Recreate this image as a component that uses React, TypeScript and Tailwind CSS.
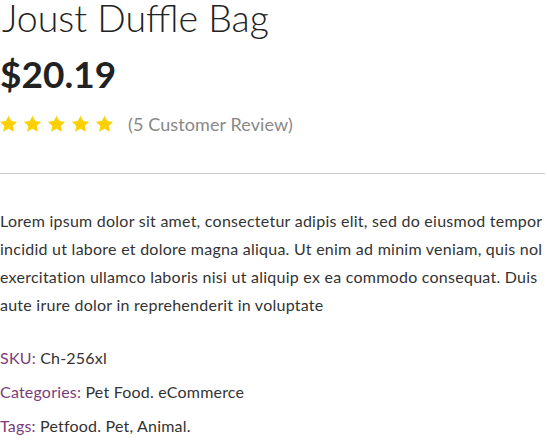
import React from "react";

function Star() {
  return (
    <svg width="19" height="18" viewBox="0 0 24 23" className="shrink-0">
      <path
        d="M12 0.8l3.3 7 7.6 0.9-5.6 5.2 1.5 7.6L12 17.7l-6.8 3.8 1.5-7.6L1.1 8.7l7.6-0.9z"
        fill="#fdd100"
      />
    </svg>
  );
}

export default function App() {
  return (
    <div
      className="w-[547px] h-[444px] bg-white overflow-hidden text-[#333]"
      style={{ fontFamily: "Lato, 'Noto Sans', sans-serif" }}
    >
      <h1 className="pl-[2px] text-[37.5px] leading-[36px] font-light text-[#222] whitespace-nowrap">
        Joust Duffle Bag
      </h1>
      <div className="text-[37px] leading-[40px] font-bold text-[#222] mt-[18px]">
        $20.19
      </div>
      <div className="flex items-center mt-[18px] h-[24px]">
        <div className="flex gap-[5px] ml-[-1px]">
          <Star />
          <Star />
          <Star />
          <Star />
          <Star />
        </div>
        <span className="ml-[14px] text-[18px] tracking-[0.1px] text-[#888]">(5 Customer Review)</span>
      </div>
      <div className="mt-[37px] border-t border-[#cccccc] w-[545px]" />
      <p className="mt-[33px] text-[16px] tracking-[0.25px] leading-[28px] text-[#333] w-[547px]">
        Lorem ipsum dolor sit amet, consectetur adipis elit, sed do eiusmod tempor incidid ut labore et dolore magna aliqua. Ut enim ad minim veniam, quis nol exercitation ullamco laboris nisi ut aliquip ex ea commodo consequat. Duis aute irure dolor in reprehenderit in voluptate
      </p>
      <div className="mt-[29px] flex flex-col gap-[14px] text-[16px] tracking-[0.2px] leading-[20px]">
        <div>
          <span className="text-[#7a3d7a]">SKU:</span> Ch-256xl
        </div>
        <div>
          <span className="text-[#7a3d7a]">Categories:</span> Pet Food. eCommerce
        </div>
        <div>
          <span className="text-[#7a3d7a]">Tags:</span> Petfood. Pet, Animal.
        </div>
      </div>
    </div>
  );
}
